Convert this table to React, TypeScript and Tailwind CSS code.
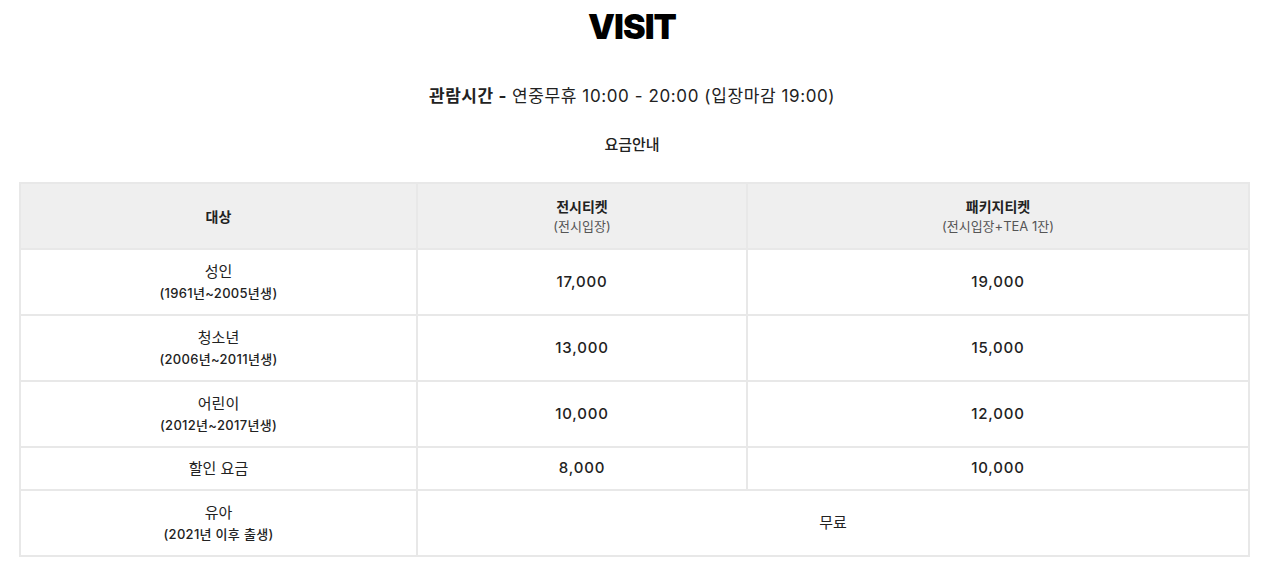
import React from "react";

const font = { fontFamily: '"Inter", "Noto Sans CJK KR", sans-serif' };

interface Row {
  label: string;
  sub?: string;
  show: string;
  pack: string;
  short?: boolean;
}

const rows: Row[] = [
  { label: "성인", sub: "(1961년~2005년생)", show: "17,000", pack: "19,000" },
  { label: "청소년", sub: "(2006년~2011년생)", show: "13,000", pack: "15,000" },
  { label: "어린이", sub: "(2012년~2017년생)", show: "10,000", pack: "12,000" },
  { label: "할인 요금", show: "8,000", pack: "10,000", short: true },
];

function Cell({ children, head, className = "" }: { children: React.ReactNode; head?: boolean; className?: string }) {
  return (
    <div
      className={`flex flex-col items-center justify-center text-center text-[#222] ${
        head ? "bg-[#efefef]" : "bg-white"
      } ${className}`}
    >
      {children}
    </div>
  );
}

export default function App(): React.ReactElement {
  return (
    <div className="w-[1264px] bg-white" style={font}>
      {/* Title */}
      <div className="h-[54px] flex items-center justify-center">
        <h1 className="text-[34px] leading-none font-black tracking-[-1px] text-black">VISIT</h1>
      </div>

      <div className="mt-[28px] h-[30px] flex items-center justify-center text-[17px] tracking-[0.6px] text-[#222]">
        <span className="font-bold">관람시간 -</span>
        <span className="ml-[5px]">연중무휴 10:00 - 20:00 (입장마감 19:00)</span>
      </div>

      <div className="mt-[21px] h-[24px] flex items-center justify-center text-[15px] font-medium text-[#222]">
        요금안내
      </div>

      {/* Price table */}
      <div className="mt-[25px] ml-[19px] w-[1231px] grid grid-cols-[395px_328px_500px] gap-[2px] p-[2px] bg-[#e8e8e8]">
        <Cell head className="h-[64px]">
          <span className="text-[14px] font-bold">대상</span>
        </Cell>
        <Cell head className="h-[64px]">
          <span className="text-[14px] font-bold leading-[20px]">전시티켓</span>
          <span className="text-[13px] text-[#555] leading-[18px]">(전시입장)</span>
        </Cell>
        <Cell head className="h-[64px]">
          <span className="text-[14px] font-bold leading-[20px]">패키지티켓</span>
          <span className="text-[13px] text-[#555] leading-[18px]">(전시입장+TEA 1잔)</span>
        </Cell>

        {rows.map((r) => (
          <React.Fragment key={r.label}>
            <Cell className={r.short ? "h-[41px]" : "h-[64px]"}>
              <span className="text-[15px] leading-[22px]">{r.label}</span>
              {r.sub && <span className="text-[13px] font-medium tracking-[0.3px] leading-[20px]">{r.sub}</span>}
            </Cell>
            <Cell className={r.short ? "h-[41px]" : "h-[64px]"}>
              <span className="text-[15px] font-medium tracking-[0.8px]">{r.show}</span>
            </Cell>
            <Cell className={r.short ? "h-[41px]" : "h-[64px]"}>
              <span className="text-[15px] font-medium tracking-[0.8px]">{r.pack}</span>
            </Cell>
          </React.Fragment>
        ))}

        <Cell className="h-[64px]">
          <span className="text-[15px] leading-[22px]">유아</span>
          <span className="text-[13px] font-medium tracking-[0.3px] leading-[20px]">(2021년 이후 출생)</span>
        </Cell>
        <Cell className="h-[64px] col-span-2">
          <span className="text-[15px]">무료</span>
        </Cell>
      </div>
    </div>
  );
}
